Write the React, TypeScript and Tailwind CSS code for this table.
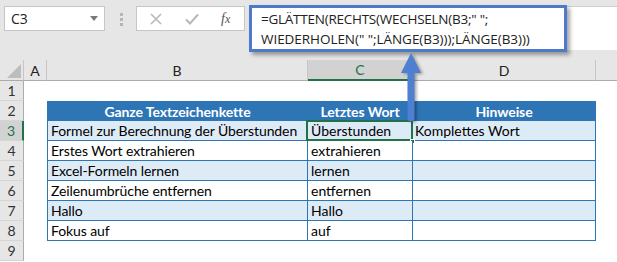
import React from "react";

const rows: { b: string; c: string; d: string }[] = [
  { b: "Formel zur Berechnung der Überstunden", c: "Überstunden", d: "Komplettes Wort" },
  { b: "Erstes Wort extrahieren", c: "extrahieren", d: "" },
  { b: "Excel-Formeln lernen", c: "lernen", d: "" },
  { b: "Zeilenumbrüche entfernen", c: "entfernen", d: "" },
  { b: "Hallo", c: "Hallo", d: "" },
  { b: "Fokus auf", c: "auf", d: "" },
];

function RowHead({ n, active }: { n: number; active?: boolean }) {
  return (
    <div
      className={
        "h-[20px] flex items-center justify-center border-b border-[#d4d4d4] text-[14px] " +
        (active
          ? "bg-[#d2d2d2] text-[#217346] border-r-2 border-r-[#217346]"
          : "bg-[#e6e6e6] text-[#333] border-r border-r-[#ababab]")
      }
    >
      {n}
    </div>
  );
}

export default function App() {
  return (
    <div className="relative w-[617px] h-[262px] overflow-hidden bg-white font-['Lato',sans-serif] text-black">
      {/* Name box + formula bar */}
      <div className="h-[60px] bg-[#e6e6e6] flex items-start pl-[4px] pt-[6px]">
        <div className="w-[101px] h-[25px] bg-white border border-[#c6c6c6] flex items-center justify-between pl-[6px] pr-[6px]">
          <span className="text-[14px] font-['Open_Sans',sans-serif] text-[#222]">C3</span>
          <svg width="8" height="5" viewBox="0 0 8 5">
            <polygon points="0,0 8,0 4,5" fill="#7a7a7a" />
          </svg>
        </div>
        <div className="ml-[15px] mt-[7px] w-[3px] flex flex-col gap-[2px]">
          <div className="w-[3px] h-[3px] bg-[#b5b5b5]" />
          <div className="w-[3px] h-[3px] bg-[#b5b5b5]" />
          <div className="w-[3px] h-[3px] bg-[#b5b5b5]" />
        </div>
        <div className="ml-[13px] w-[109px] h-[25px] bg-white border border-[#c6c6c6] flex items-center pl-[13px]">
          <svg width="12" height="12" viewBox="0 0 12 12">
            <path d="M1 1 L11 11 M11 1 L1 11" stroke="#b8b8b8" strokeWidth="1.6" />
          </svg>
          <svg className="ml-[23px]" width="14" height="12" viewBox="0 0 14 12">
            <path d="M1 6.5 L5 10.5 L13 1.5" stroke="#b8b8b8" strokeWidth="2" fill="none" />
          </svg>
          <span className="ml-[22px] text-[14px] italic font-['Liberation_Serif',serif] text-[#555] leading-none">
            f<span className="text-[12px]">x</span>
          </span>
        </div>
        <div className="ml-[4px] -mt-[1px] w-[318px] h-[47px] bg-white border-[3px] border-[#4f7ac8] shadow-[3px_3px_4px_rgba(0,0,0,0.35)] pl-[9px] pt-[1px] text-[13.5px] leading-[20px] font-['Open_Sans',sans-serif] text-[#222] z-10 whitespace-nowrap tracking-[-0.25px]">
          <div>=GLÄTTEN(RECHTS(WECHSELN(B3;" ";</div>
          <div className="tracking-[-0.05px]">WIEDERHOLEN(" ";LÄNGE(B3)));LÄNGE(B3)))</div>
        </div>
        <div className="flex-1 h-[44px] bg-white border-t border-[#d0d0d0]" />
      </div>

      {/* Worksheet grid */}
      <div className="grid grid-cols-[24px_23px_261px_105px_183px_21px]">
        {/* column headers */}
        <div className="h-[21px] bg-[#e6e6e6] border-b border-[#ababab] border-r border-r-[#c6c6c6] flex items-end justify-end pr-[2px] pb-[2px]">
          <svg width="14" height="14" viewBox="0 0 14 14">
            <polygon points="14,0 14,14 0,14" fill="#bdbdbd" />
          </svg>
        </div>
        <div className="h-[21px] bg-[#e6e6e6] border-b border-[#ababab] border-r border-r-[#c6c6c6] flex items-center justify-center text-[14px] text-[#222]">A</div>
        <div className="h-[21px] bg-[#e6e6e6] border-b border-[#ababab] border-r border-r-[#c6c6c6] flex items-center justify-center text-[14px] text-[#222]">B</div>
        <div className="h-[21px] bg-[#d2d2d2] border-b-2 border-[#217346] border-r border-r-[#c6c6c6] flex items-center justify-center text-[14px] text-[#217346]">C</div>
        <div className="h-[21px] bg-[#e6e6e6] border-b border-[#ababab] border-r border-r-[#c6c6c6] flex items-center justify-center text-[14px] text-[#222]">D</div>
        <div className="h-[21px] bg-[#e6e6e6] border-b border-[#ababab]" />

        {/* row 1 */}
        <RowHead n={1} />
        <div className="col-span-5 h-[20px]" />

        {/* row 2: table header */}
        <RowHead n={2} />
        <div className="h-[20px]" />
        <div className="h-[20px] bg-[#2e75b6] border border-[#2e75b6] text-white font-bold text-[14px] tracking-[-0.1px] flex items-center justify-center">
          Ganze Textzeichenkette
        </div>
        <div className="h-[20px] bg-[#2e75b6] border-y border-r border-[#2e75b6] text-white font-bold text-[14px] tracking-[-0.1px] flex items-center justify-center">
          Letztes Wort
        </div>
        <div className="h-[20px] bg-[#2e75b6] border-y border-r border-[#2e75b6] text-white font-bold text-[14px] tracking-[-0.1px] flex items-center justify-center">
          Hinweise
        </div>
        <div className="h-[20px]" />

        {rows.map((r, i) => {
          const fill = i % 2 === 0 ? "bg-[#ddebf7]" : "bg-white";
          return (
            <React.Fragment key={i}>
              <RowHead n={i + 3} active={i === 0} />
              <div className="h-[20px]" />
              <div className={`h-[20px] ${fill} border-l border-r border-b border-[#2e75b6] pl-[3px] text-[14px] leading-[19px] whitespace-nowrap tracking-[-0.1px]`}>
                {r.b}
              </div>
              <div className={`relative h-[20px] ${fill} border-r border-b border-[#2e75b6] pl-[3px] text-[14px] leading-[19px] whitespace-nowrap`}>
                {r.c}
                {i === 0 && (
                  <>
                    <div className="absolute -left-[2px] -top-[1px] -right-[1px] -bottom-[1px] border-2 border-[#217346]" />
                    <div className="absolute -right-[3px] -bottom-[4px] w-[5px] h-[5px] bg-[#217346] border border-white" />
                  </>
                )}
              </div>
              <div className={`h-[20px] ${fill} border-r border-b border-[#2e75b6] pl-[2px] text-[14px] leading-[19px] whitespace-nowrap`}>
                {r.d}
              </div>
              <div className="h-[20px]" />
            </React.Fragment>
          );
        })}

        {/* row 9 */}
        <RowHead n={9} />
        <div className="col-span-5 h-[20px]" />
      </div>

      {/* Pointer from the formula bar down to the selected cell */}
      <svg
        className="absolute left-[398px] top-[51px] z-20 drop-shadow-[2px_1px_1.5px_rgba(0,0,0,0.35)]"
        width="28"
        height="74"
        viewBox="0 0 28 74"
      >
        <polygon points="3,22 13,2 23,22" fill="#4f7fd0" />
        <path d="M9.5 21 H16.5 V67 A3.5 3.5 0 0 1 9.5 67 Z" fill="#4f7fd0" />
      </svg>
    </div>
  );
}
